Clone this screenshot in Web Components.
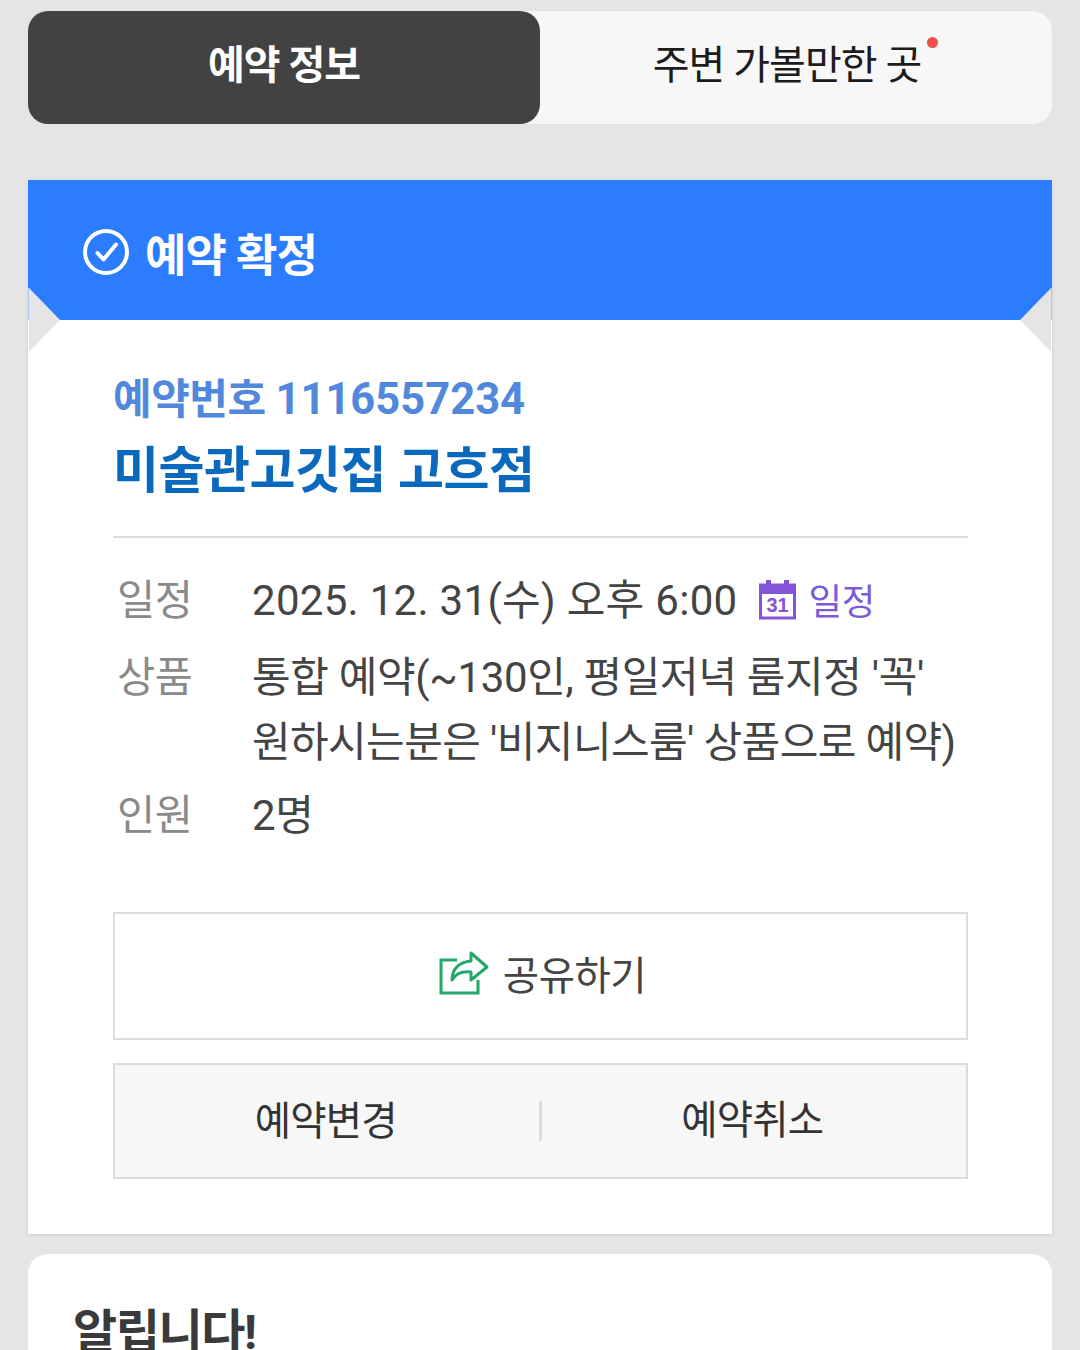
<!DOCTYPE html>
<html lang="ko">
<head>
<meta charset="utf-8">
<style>
	html, body { margin: 0; height: 1350px; overflow: hidden; }
	body {
		background: #e5e5e5;
		font-family: Roboto, "Noto Sans CJK KR", sans-serif;
		padding: 11px 28px 0;
		box-sizing: border-box;
	}
	.date { letter-spacing: .3px; }
	.wide { letter-spacing: -.35px; }
	.tight { letter-spacing: -.6px; }
</style>
</head>
<body>
<tab-bar></tab-bar>
<booking-card>
	<info-row label="일정" style="margin-bottom:10px"><span class="date">2025. 12. 31(수) 오후 6:00</span><calendar-link></calendar-link></info-row>
	<info-row label="상품" style="margin-bottom:8px"><span class="wide">통합 예약(~130인, 평일저녁 룸지정 '꼭'</span><br><span class="tight">원하시는분은 '비지니스룸' 상품으로 예약)</span></info-row>
	<info-row label="인원">2명</info-row>
</booking-card>
<notice-card></notice-card>
<script>
class TabBar extends HTMLElement
{
	constructor ()
	{
		super();
		this.attachShadow({mode:"open"});
		this.shadowRoot.innerHTML = `
			<style>
				:host {
					display: flex;
					height: 113px;
					background: #f7f7f7;
					border-radius: 20px;
					font-size: 40px;
					letter-spacing: -1px;
				}
				div {
					flex: 1;
					display: flex;
					align-items: center;
					justify-content: center;
					padding-bottom: 12px;
					box-sizing: border-box;
					color: #1c1c1c;
				}
				.on {
					background: #424242;
					color: #fff;
					font-weight: 700;
					border-radius: 20px;
				}
				.off span { position: relative; padding-right: 18px; }
				i {
					position: absolute;
					right: 1px;
					top: 4px;
					width: 11px;
					height: 11px;
					border-radius: 50%;
					background: #f0504c;
				}
			</style>
			<div class="on"><span>예약 정보</span></div>
			<div class="off"><span>주변 가볼만한 곳<i></i></span></div>
		`;
	}
}

class BookingCard extends HTMLElement
{
	constructor ()
	{
		super();
		this.attachShadow({mode:"open"});
		this.shadowRoot.innerHTML = `
			<style>
				:host {
					display: block;
					position: relative;
					margin-top: 56px;
					background: #fff;
					height: 1054px;
					box-shadow: 0 1px 3px rgba(0,0,0,.12);
				}
				header {
					height: 140px;
					background: #2b7cff;
					color: #fff;
					display: flex;
					align-items: center;
					gap: 16px;
					padding: 4px 0 0 55px;
					box-sizing: border-box;
					font-size: 45px;
					font-weight: 700;
					letter-spacing: -1px;
				}
				.notch {
					position: absolute;
					top: 108px;
					width: 31px;
					height: 64px;
					background: #e5e5e5;
				}
				.left { left: 1px; clip-path: polygon(0 0, 100% 50%, 0 100%); }
				.right { right: 1px; clip-path: polygon(100% 0, 0 50%, 100% 100%); }
				.edge {
					position: absolute;
					top: 108px;
					width: 1px;
					height: 32px;
					background: #a9c8f5;
				}
				.edge.l { left: 0; }
				.edge.r { right: 0; }
				main { padding: 51px 84px 0 85px; }
				.no {
					color: #5288dc;
					font-size: 42px;
					font-weight: 700;
					line-height: 58px;
					letter-spacing: -.5px;
				}
				.no span { font-size: 43.500px; letter-spacing: 0; }
				h1 {
					margin: 8px 0 0;
					color: #0a68bd;
					font-size: 50px;
					font-weight: 700;
					line-height: 68px;
					letter-spacing: -.5px;
					padding-bottom: 31px;
					border-bottom: 2px solid #dcdcdc;
				}
				.rows { padding-top: 30px; }
				.share, .pair {
					box-sizing: border-box;
					border: 2px solid #dcdcdc;
					color: #444;
					font-size: 39.500px;
					letter-spacing: -.5px;
				}
				.share {
					margin-top: 64px;
					height: 128px;
					display: flex;
					align-items: center;
					justify-content: center;
					gap: 13px;
					padding: 0 0 8px 3px;
				}
				.share svg { margin-top: 4px; }
				.pair {
					margin-top: 23px;
					height: 116px;
					background: #f7f7f7;
					display: flex;
					align-items: center;
					color: #333;
					letter-spacing: -.8px;
				}
				.pair span {
					flex: 1;
					text-align: center;
					padding: 0 2px 8px 0;
				}
				.pair span + span { border-left: 3px solid #dcdcdc; line-height: 40px; padding: 0 3px 0 0; }
			</style>
			<header>
				<svg width="46" height="46" viewBox="0 0 46 46" fill="none" stroke="#fff">
					<circle cx="23" cy="23" r="21" stroke-width="4"/>
					<path d="M14.500 24l6 6.500 12.500-15" stroke-width="4" stroke-linecap="round" stroke-linejoin="round"/>
				</svg>
				<span>예약 확정</span>
			</header>
			<div class="edge l"></div>
			<div class="edge r"></div>
			<div class="notch left"></div>
			<div class="notch right"></div>
			<main>
				<div class="no">예약번호 <span>1116557234</span></div>
				<h1>미술관고깃집 고흐점</h1>
				<div class="rows"><slot></slot></div>
				<div class="share">
					<svg width="52" height="46" viewBox="0 0 52 46" fill="none" stroke="#22a868" stroke-width="3">
						<path d="M19 9H3v33h37V29"/>
						<path d="M33 2l16 14-16 13v-8c-9-1-15 1-19 8 0-11 7-18 19-19z" stroke-linejoin="round"/>
					</svg>
					<span>공유하기</span>
				</div>
				<div class="pair"><span>예약변경</span><span>예약취소</span></div>
			</main>
		`;
	}
}

class InfoRow extends HTMLElement
{
	constructor ()
	{
		super();
		this.attachShadow({mode:"open"});
		this.shadowRoot.innerHTML = `
			<style>
				:host {
					display: flex;
					font-size: 42px;
					line-height: 65px;
					letter-spacing: -.4px;
					margin-bottom: 9px;
				}
				b {
					width: 139px;
					padding-left: 4px;
					box-sizing: border-box;
					flex: none;
					font-size: 41.500px;
					font-weight: 400;
					color: #8a8a8a;
				}
				div { color: #444; flex: 1; white-space: nowrap; }
			</style>
			<b></b><div><slot></slot></div>
		`;
		this.shadowRoot.querySelector("b").textContent = this.getAttribute("label");
	}
}

class CalendarLink extends HTMLElement
{
	constructor ()
	{
		super();
		this.attachShadow({mode:"open"});
		this.shadowRoot.innerHTML = `
			<style>
				:host {
					display: inline-flex;
					align-items: center;
					gap: 12px;
					margin-left: 22px;
					color: #7c5cd6;
					font-size: 36.500px;
					vertical-align: top;
				}
				svg { margin-bottom: 4px; }
				span { margin-top: 2px; }
				text { font: 700 20px "Liberation Sans", sans-serif; letter-spacing: 0; }
			</style>
			<svg width="37" height="40" viewBox="0 0 37 40">
				<rect x="1.500" y="5" width="34" height="33" fill="none" stroke="#8454d8" stroke-width="3"/>
				<rect x="0" y="4" width="37" height="10" fill="#8454d8"/>
				<rect x="7" y="0" width="5" height="6" fill="#8454d8"/>
				<rect x="25" y="0" width="5" height="6" fill="#8454d8"/>
				<text x="18.500" y="32" text-anchor="middle" fill="#8454d8">31</text>
			</svg>
			<span>일정</span>
		`;
	}
}

class NoticeCard extends HTMLElement
{
	constructor ()
	{
		super();
		this.attachShadow({mode:"open"});
		this.shadowRoot.innerHTML = `
			<style>
				:host {
					display: block;
					margin-top: 20px;
					height: 96px;
					background: #fff;
					border-radius: 20px 20px 0 0;
					padding: 47px 0 0 45px;
					box-sizing: border-box;
					color: #3a3a3a;
					font-size: 48px;
					font-weight: 700;
					line-height: 64px;
					letter-spacing: -1.400px;
					overflow: hidden;
				}
			</style>
			알립니다!
		`;
	}
}

customElements.define("tab-bar", TabBar);
customElements.define("booking-card", BookingCard);
customElements.define("info-row", InfoRow);
customElements.define("calendar-link", CalendarLink);
customElements.define("notice-card", NoticeCard);
</script>
</body>
</html>
